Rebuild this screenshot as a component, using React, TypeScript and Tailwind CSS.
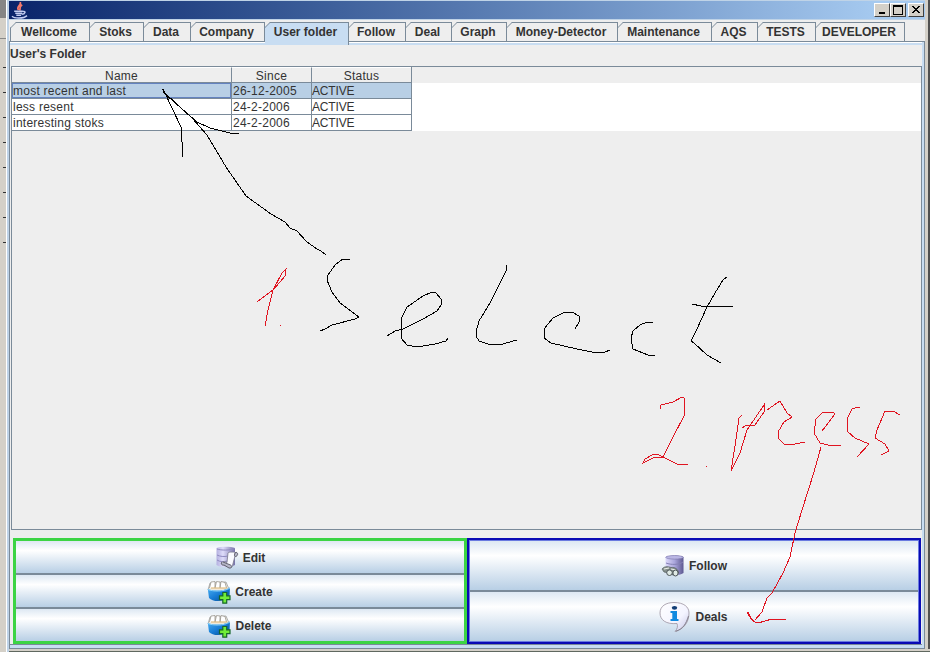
import type { ReactNode } from "react";

const tabs = [
  { label: "Wellcome", width: "w-[79px]" },
  { label: "Stoks", width: "w-[54px]" },
  { label: "Data", width: "w-[47px]" },
  { label: "Company", width: "w-[74px]" },
  { label: "User folder", width: "w-[84px]" },
  { label: "Follow", width: "w-[57px]" },
  { label: "Deal", width: "w-[46px]" },
  { label: "Graph", width: "w-[55px]" },
  { label: "Money-Detector", width: "w-[111px]" },
  { label: "Maintenance", width: "w-[94px]" },
  { label: "AQS", width: "w-[46px]" },
  { label: "TESTS", width: "w-[58px]" },
  { label: "DEVELOPER", width: "w-[89px]" },
];

const rows = [
  ["most recent and last", "26-12-2005", "ACTIVE"],
  ["less resent", "24-2-2006", "ACTIVE"],
  ["interesting stoks", "24-2-2006", "ACTIVE"],
];

function Tab({ label, width, selected, first }: { label: string; width: string; selected: boolean; first: boolean }) {
  return (
    <div
      className={`relative shrink-0 border-t border-r border-[#7a8a99] pr-[2px] text-center text-[12px] leading-[18px] font-bold whitespace-nowrap ${width} ${selected ? "h-[23px] bg-[#c8ddf2]" : "h-[19px] bg-[#eeeeee]"}`}
    >
      {first && <span className="absolute top-[4px] -left-px h-[14px] w-px bg-[#7a8a99]" />}
      <svg className="absolute -top-px -left-px h-[7px] w-[7px]" viewBox="0 0 7 7">
        <path d="M0 0H6L0 6Z" fill="#eeeeee" />
        <path d="M0.5 6L6 0.5" stroke="#7a8a99" />
        {!first && <path d="M.5 0V7" stroke="#7a8a99" />}
      </svg>
      {label}
    </div>
  );
}

function JavaCup() {
  return (
    <svg className="ml-[2px] h-[17px] w-[17px]" viewBox="0 0 16 16" fill="none">
      <path d="M8.5 0C10.5 3 4.5 4 7 7.5M10.5 2.5C7 5 9.5 5 8 8" stroke="#f47a6c" strokeWidth="1.7" />
      <path d="M3 8.7H11M11 9C14.5 8 13.5 11.5 10 11.5M4 10.6H10.5M5 12.5H9.5" stroke="#c4cef2" strokeWidth="1.4" />
      <path d="M1 13.3C3 15.8 12 15.8 15 12.8" stroke="#c4cef2" strokeWidth="1.4" />
    </svg>
  );
}

function WindowButton({ children }: { children: ReactNode }) {
  return (
    <div className="flex h-[14px] w-[16px] items-center justify-center border border-t-white border-r-[#404040] border-b-[#404040] border-l-white bg-[#d4d0c8]">
      <svg className="h-[12px] w-[14px]" viewBox="0 0 14 12" fill="none" stroke="#000" shapeRendering="crispEdges">
        {children}
      </svg>
    </div>
  );
}

function ScrollIcon() {
  return (
    <svg className="h-[24px] w-[24px]" viewBox="0 0 24 24">
      <defs>
        <linearGradient id="db">
          <stop stopColor="#dcd9fa" />
          <stop offset=".5" stopColor="#aaa6dc" />
          <stop offset="1" stopColor="#5d5890" />
        </linearGradient>
        <linearGradient id="dbLight">
          <stop stopColor="#b4b0e0" />
          <stop offset=".35" stopColor="#dedcfa" />
          <stop offset="1" stopColor="#7873aa" />
        </linearGradient>
      </defs>
      <path d="M1.5 2C5 .3 16 .3 20 2V19C15 22 6 22 1.5 19Z" fill="url(#dbLight)" />
      <path d="M2 3C6 4.5 15 4.5 20 2.5M2 9C5 10.5 9 11 13 10M2 14C5 16 9 16 12 15" fill="none" stroke="#8f8ac0" />
      <path d="M13 7C14 5.5 20 6 22 7L20 10L17.5 19.5C17 22 15 21.5 13.5 20L7 18.5C5 16 8 15 12 16.5Z" fill="#fafaff" stroke="#77778a" strokeWidth=".8" />
      <path d="M20 7C22.5 5 24 9 21 10.5C19.5 11 19 9 20 7ZM7 16C5.5 18 7 19.5 9 19L14 22C17 22.5 17.5 20 15.5 19L8 16" fill="#b6b6c8" stroke="#555561" strokeWidth=".9" />
    </svg>
  );
}

function FolderIcon() {
  return (
    <svg className="h-[24px] w-[24px]" viewBox="0 0 24 24">
      <defs>
        <linearGradient id="folder" x1="0" y1="0" x2="1" y2="1">
          <stop stopColor="#4ab0f4" />
          <stop offset=".5" stopColor="#177bd4" />
          <stop offset="1" stopColor="#06498c" />
        </linearGradient>
      </defs>
      <path d="M1 10L3 3L19 2L22 9L12 12Z" fill="#efe9dc" stroke="#8f9497" strokeWidth=".7" />
      <path d="M2.5 8L4 2L8 1.5V8M8 8L9.5 1.5L13 2V8M13 8L14 1.5L18 2.5L19.5 8" fill="#fff" stroke="#99958e" strokeWidth=".8" />
      <path d="M4 8H20" stroke="#dfbd80" strokeWidth="1.2" />
      <path d="M.8 9C3 10 7 10.5 12 10.5C17 10.5 21 9 23 7.5L22.5 17C17 22 6 22.5 2 18Z" fill="url(#folder)" />
      <path d="M.8 9.5C6 11.5 17 12 23 8" fill="none" stroke="#8dd4fa" />
      <path d="M15.8 12.5H19.7V15.8H23V19.7H19.7V23.2H15.8V19.7H12.5V15.8H15.8Z" fill="#70ed38" stroke="#17672a" strokeWidth="1.2" />
    </svg>
  );
}

function BinocularsIcon() {
  return (
    <svg className="h-[24px] w-[24px]" viewBox="0 0 24 24">
      <path d="M4.5 3C8 1 19 1 22.5 3V19C18 22 9 22 4.5 19Z" fill="url(#db)" />
      <ellipse cx="13.5" cy="3.3" rx="8.8" ry="1.8" fill="#bab6e4" stroke="#7b77a9" strokeWidth=".6" />
      <path d="M5 9C10 11 18 11 22 8" fill="none" stroke="#8581b5" />
      <path d="M1 15C3 12.5 6 12 10 13.5C14 13 17 15 17.5 19L12 21L8 19L3 18Z" fill="#87918e" stroke="#505b59" strokeWidth=".7" />
      <path d="M3 15L8 14M10 15L15 16" stroke="#e9f0ea" strokeWidth="1.2" />
      <ellipse cx="8.5" cy="18.7" rx="2.8" ry="2.8" fill="#e0eae5" stroke="#4c5557" />
      <ellipse cx="14.5" cy="19" rx="2.6" ry="3" fill="#e0eae5" stroke="#4c5557" />
    </svg>
  );
}

function InfoIcon() {
  return (
    <svg className="h-[32px] w-[32px]" viewBox="0 0 32 32">
      <defs>
        <linearGradient id="bubble" x1="0" y1="0" x2="1" y2="1">
          <stop stopColor="#fff" />
          <stop offset=".6" stopColor="#f4f4ff" />
          <stop offset="1" stopColor="#c3c3e5" />
        </linearGradient>
      </defs>
      <path d="M15 1.5C25 1.5 30 6 30 12C30 21 25 28 16 30.5C18.5 28 19 25 18 22.5C7 23.5 1 19 1 12C1 5 7 1.5 15 1.5Z" fill="url(#bubble)" stroke="#9a92a0" strokeWidth=".8" />
      <path d="M29.5 15C27 23 24 28 17 30.2" fill="none" stroke="#85808c" />
      <ellipse cx="15.5" cy="6.8" rx="2.7" ry="1.9" fill="#123e75" />
      <path d="M11.5 10H18V18H19.5V20H11.5V18H13.3V12H11.5Z" fill="#118ae0" />
    </svg>
  );
}

function ActionButton({ icon, label, height, nudge }: { icon: ReactNode; label: string; height: string; nudge: string }) {
  return (
    <div
      className={`flex w-full items-center justify-center gap-[4px] bg-linear-to-b from-[#dde8f3] via-white via-30% to-[#b8cfe5] text-[12px] font-bold ${height} ${nudge}`}
    >
      {icon}
      <span>{label}</span>
    </div>
  );
}

function Annotations() {
  return (
    <svg className="pointer-events-none absolute inset-0 h-[652px] w-[930px]" viewBox="0 0 930 652" fill="none" shapeRendering="crispEdges">
      <g stroke="#000">
        <path d="M162 89L164 89L163 92L167 95L192 118L207 135L226 167L246 196L271 214L285 222L290 228L297 231L307 242L317 249L321 251L326 255" />
        <path d="M164 91L181 127L182 142L182 157M165 94L197 122L210 128L230 133L239 134" />
        <path d="M350 259L343 259L335 265L328 275L327 280L332 292L340 303L359 317L355 319L332 325L325 329L320 331" />
        <path d="M387 336L395 331L403 329L423 319L437 311L441 305L441 299L436 293L432 292L423 296L407 307L402 317L401 330L401 338L407 345L417 347L435 344L446 341L448 338" />
        <path d="M507 265L506 271L490 303L479 321L476 332L476 336L479 341L488 344L503 344L513 341L517 340" />
        <path d="M575 329L579 322L579 316L572 312L565 312L553 318L544 329L544 338L551 343L577 349L592 352L605 352L610 350" />
        <path d="M653 322L647 322L640 325L633 331L631 338L633 349L648 355L655 355" />
        <path d="M727 277L723 280L715 293L707 307L697 329L691 341L694 343L707 355L721 363M692 304L701 306L733 307" />
      </g>
      <g stroke="#e01420">
        <path d="M257 302L274 289L285 276L286 269L282 273L273 290L268 310L265 326M280 325H281" />
        <path d="M660 409L661 405L673 402L682 397L684 398L684 416L673 437L663 457L653 458L643 463L645 459L652 455L657 454L663 457L677 464L688 464M706 466H707" />
        <path d="M742 415L739 418L735 446L731 471L740 453L747 430L764 405L764 412L755 425L747 425L742 428" />
        <path d="M767 410L780 401L787 413L792 417L784 422L778 432L778 438L784 444L795 444L805 442" />
        <path d="M822 431L835 414L833 412L823 412L816 419L814 433L820 443L828 445L841 445" />
        <path d="M860 407L855 408L852 409L847 419L848 432L855 438L869 444L857 457" />
        <path d="M900 415L893 411L885 411L877 430L875 438L885 444L889 451L881 455" />
        <path d="M821 447L814 472L802 510L795 533L790 557L783 573L772 593L767 598L762 612L755 620M747 612L751 619L755 622L758 623L772 619L786 619" />
        <path d="M748 612L752 620L757 623" />
      </g>
    </svg>
  );
}

export default function App() {
  return (
    <div className="relative flex h-[652px] w-[930px] overflow-hidden bg-[#eeeeee] font-['Liberation_Sans',Arial,sans-serif] text-[#333333]">
      <div className="flex w-[7px] shrink-0 flex-col border-r border-white bg-[#d4d0c8]">
        <div className="h-[18px] bg-[#858585]" />
        <div className="h-[21px] border-b border-[#888888]" />
        <div className="flex flex-col items-end gap-[24px] pt-[28px]">
          {[0, 1, 2, 3, 4, 5, 6, 7].map((n) => (
            <span key={n} className="h-px w-[3px] bg-[#333333]" />
          ))}
        </div>
      </div>
      <div className="flex w-[2px] shrink-0 bg-[#bfd3e7]" />
      <div className="flex min-w-0 flex-1 flex-col">
        <div className="flex min-h-0 flex-1">
          <div className="flex min-w-0 flex-1 flex-col">
            <div className="flex h-[19px] shrink-0 items-center border-t border-[#bfd3e7] bg-linear-to-r from-[#0a246a] to-[#a6caf0] to-95% pr-[1px]">
              <JavaCup />
              <div className="ml-auto flex">
                <WindowButton><path d="M4 9H10" strokeWidth="2" /></WindowButton>
                <WindowButton><path d="M2.5 1.5H11.5V10.5H2.5ZM2 2H12" /></WindowButton>
                <div className="w-[2px]" />
                <WindowButton><path d="M3 2L10 9M4 2L11 9M10 2L3 9M11 2L4 9" /></WindowButton>
              </div>
            </div>
            <div className="flex h-[22px] shrink-0 border-t border-[#bfd3e7] pt-[2px] pl-[2px]">
              {tabs.map((tab, i) => (
                <Tab key={tab.label} {...tab} selected={i === 4} first={i === 0} />
              ))}
            </div>
            <div className="flex min-h-0 flex-1 flex-col border border-[#7a8a99] bg-[#eeeeee]">
              <div className="flex min-h-0 flex-1 flex-col border-r-[2px] border-[#c8ddf2]">
                <div className="h-[3px] shrink-0 border-t border-white bg-[#c8ddf2]" />
                <div className="h-[21px] shrink-0 pt-[1px] text-[12px] leading-[17px] font-bold">User's Folder</div>
                <div className="ml-[1px] flex h-[464px] w-[911px] shrink-0 flex-col border border-[#7a8a99]">
                  <div className="flex h-[16px] w-[400px] border-r border-b border-[#7a8a99] text-center text-[12px] leading-[17px] tracking-[0.25px]">
                    <div className="w-[220px] border-t border-r border-t-white border-r-[#7a8a99]">Name</div>
                    <div className="w-[80px] border-t border-r border-t-white border-r-[#7a8a99]">Since</div>
                    <div className="flex-1 border-t border-white">Status</div>
                  </div>
                  <div className="bg-white">
                    {rows.map((row, i) => (
                      <div key={row[0]} className={`flex h-[16px] w-[400px] border-r border-b border-[#7a8a99] text-[12px] leading-[16px] ${i === 0 ? "bg-[#b8cfe5]" : "bg-white"}`}>
                        <div className={`w-[220px] border-r border-[#7a8a99] pl-px tracking-[0.25px] ${i === 0 ? "shadow-[inset_0_0_0_1px_#6382bf]" : ""}`}>{row[0]}</div>
                        <div className="w-[80px] border-r border-[#7a8a99] pl-px tracking-[0.25px]">{row[1]}</div>
                        <div className="flex-1 tracking-[-0.15px]">{row[2]}</div>
                      </div>
                    ))}
                  </div>
                </div>
                <div className="mt-[8px] ml-[3px] flex h-[106px] shrink-0">
                  <div className="flex w-[454px] flex-col gap-[2px] border-[3px] border-[#3cd444] bg-[#7a8a99]">
                    <ActionButton icon={<ScrollIcon />} label="Edit" height="h-[32px]" nudge="pt-px" />
                    <ActionButton icon={<FolderIcon />} label="Create" height="h-[32px]" nudge="pt-px" />
                    <ActionButton icon={<FolderIcon />} label="Delete" height="h-[32px]" nudge="pt-px pr-px" />
                  </div>
                  <div className="flex w-[454px] flex-col border-2 border-[#0a0ab4]">
                    <div className="flex flex-1 flex-col gap-[2px] border border-[#6a7ae0] bg-[#7a8a99]">
                      <ActionButton icon={<BinocularsIcon />} label="Follow" height="h-[49px]" nudge="pr-0" />
                      <ActionButton icon={<InfoIcon />} label="Deals" height="h-[49px]" nudge="pr-px" />
                    </div>
                  </div>
                </div>
                <div className="flex-1 border-t border-[#7a8a99] bg-[#c8ddf2]" />
              </div>
            </div>
          </div>
          <div className="w-[5px] shrink-0 border-r-2 border-[#505050] bg-[#d4d0c8]" />
        </div>
        <div className="h-[3px] shrink-0 border-b border-[#606860] bg-[#d4d0c8]" />
      </div>
      <Annotations />
    </div>
  );
}
